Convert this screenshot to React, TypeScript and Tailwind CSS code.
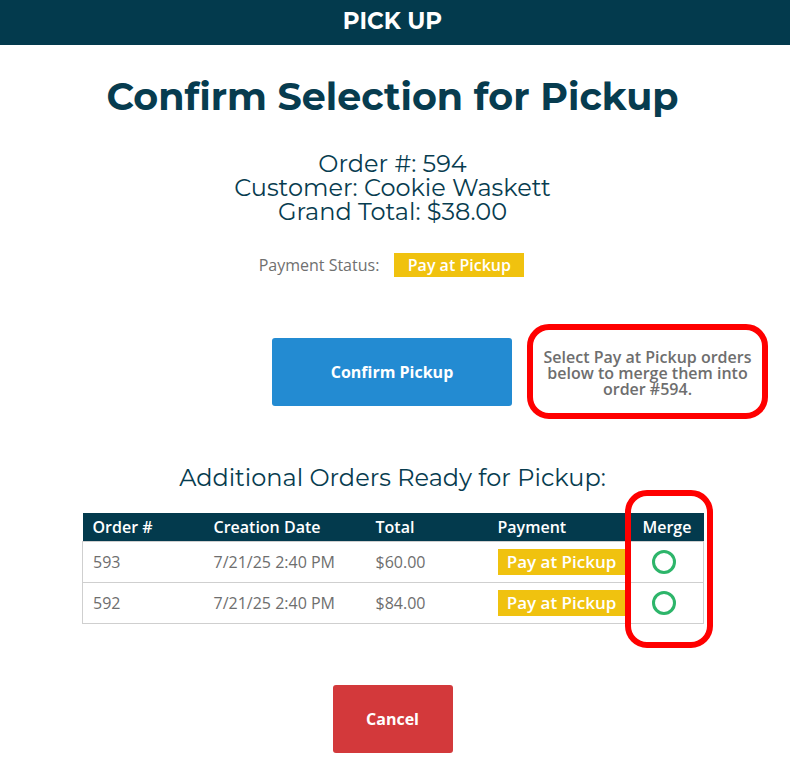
import React from "react";

const sans = "'Open Sans', sans-serif";

const Badge = ({ className = "" }: { className?: string }) => (
  <span
    className={`inline-flex items-center justify-center bg-[#f0c20f] text-white font-semibold ${className}`}
    style={{ fontFamily: sans }}
  >
    Pay at Pickup
  </span>
);

const Radio = () => (
  <svg width="26" height="26" viewBox="0 0 26 26">
    <circle cx="13" cy="13" r="10.5" fill="none" stroke="#2db56a" strokeWidth="3" />
  </svg>
);

export default function App() {
  const rows = [
    { id: "593", date: "7/21/25 2:40 PM", total: "$60.00" },
    { id: "592", date: "7/21/25 2:40 PM", total: "$84.00" },
  ];
  const head = "'Montserrat', 'Lato', 'Noto Sans', sans-serif";
  return (
    <div className="w-[790px] h-[761px] bg-white overflow-hidden relative">
      <div
        className="h-[45px] bg-[#033a4d] flex items-center justify-center text-white text-[23px] font-bold pb-[2px] pr-[5px]"
        style={{ fontFamily: head }}
      >
        PICK UP
      </div>
      <div className="w-[785px]">
        <h1
          className="mt-[30px] text-center text-[38px] leading-[44px] font-bold text-[#073c4f]"
          style={{ fontFamily: head }}
        >
          Confirm Selection for Pickup
        </h1>
        <div
          className="mt-[33px] text-center text-[24px] leading-[24px] text-[#073c4f]"
          style={{ fontFamily: head }}
        >
          <div>Order #: 594</div>
          <div>Customer: Cookie Waskett</div>
          <div>Grand Total: $38.00</div>
        </div>
        <div className="mt-[29px] flex items-center justify-center gap-[15px] pr-[2px]">
          <span className="text-[16px] text-[#707070]" style={{ fontFamily: sans }}>
            Payment Status:
          </span>
          <Badge className="w-[130px] h-[24px] text-[16px]" />
        </div>
      </div>
      <div className="mt-[47px] flex items-center pl-[272px] gap-[15px]">
        <button
          className="w-[240px] h-[68px] rounded-[3px] bg-[#238bd2] text-white text-[16px] font-bold"
          style={{ fontFamily: sans }}
        >
          Confirm Pickup
        </button>
        <div
          className="w-[241px] h-[95px] border-[6px] border-[#ff0000] rounded-[22px] flex items-center justify-center text-center text-[16px] leading-[16px] font-semibold text-[#6e6e6e] px-1 pt-[2px]"
          style={{ fontFamily: sans }}
        >
          Select Pay at Pickup orders below to merge them into order #594.
        </div>
      </div>
      <div
        className="w-[785px] mt-[44px] text-center text-[24px] leading-[30px] text-[#073c4f]"
        style={{ fontFamily: head }}
      >
        Additional Orders Ready for Pickup:
      </div>
      <div className="mt-[20px] ml-[82px] w-[621px] relative">
        <table className="w-[621px] border-collapse table-fixed text-[16px]" style={{ fontFamily: sans }}>
          <colgroup>
            <col className="w-[121px]" />
            <col className="w-[162px]" />
            <col className="w-[122px]" />
            <col className="w-[145px]" />
            <col className="w-[71px]" />
          </colgroup>
          <thead>
            <tr className="bg-[#033a4d] text-white h-[28px]">
              <th className="text-left font-semibold pl-[10px]">Order #</th>
              <th className="text-left font-semibold pl-[10px]">Creation Date</th>
              <th className="text-left font-semibold pl-[10px]">Total</th>
              <th className="text-left font-semibold pl-[10px]">Payment</th>
              <th className="text-left font-semibold pl-[10px]">Merge</th>
            </tr>
          </thead>
          <tbody>
            {rows.map((r) => (
              <tr key={r.id} className="h-[41px] border border-[#cfcfcf] text-[#6e6e6e]">
                <td className="pl-[10px]">{r.id}</td>
                <td className="pl-[10px]">{r.date}</td>
                <td className="pl-[10px]">{r.total}</td>
                <td className="pl-[10px]">
                  <Badge className="w-[128px] h-[26px] text-[17px] align-middle" />
                </td>
                <td className="pl-[18px]">
                  <div className="flex items-center">
                    <Radio />
                  </div>
                </td>
              </tr>
            ))}
          </tbody>
        </table>
        <div className="absolute left-[543px] top-[-23px] w-[88px] h-[158px] border-[6px] border-[#ff0000] rounded-[22px]" />
      </div>
      <div className="w-[785px] mt-[61px] flex justify-center">
        <button
          className="w-[120px] h-[68px] rounded-[3px] bg-[#d3393b] text-white text-[16px] font-bold"
          style={{ fontFamily: sans }}
        >
          Cancel
        </button>
      </div>
    </div>
  );
}
